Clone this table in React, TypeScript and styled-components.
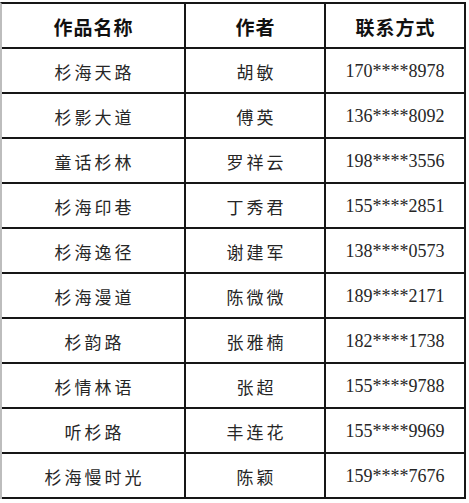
import React from 'react'
import styled, { createGlobalStyle } from 'styled-components'

const GlobalStyle = createGlobalStyle`
  html, body {
    margin: 0;
    padding: 0;
    background: #fff;
  }
`

const Page = styled.div`
  padding: 2px 0 0 0;
  width: 469px;
  height: 503px;
  box-sizing: border-box;
  overflow: hidden;
`

const Grid = styled.div`
  display: grid;
  grid-template-columns: 184px 140px 140px;
  grid-auto-rows: 45px;
  border-top: 2px solid #161616;
  border-left: 2px solid #bdbdbd;
  width: max-content;
`

const Cell = styled.div<{ $head?: boolean; $num?: boolean }>`
  display: flex;
  align-items: center;
  justify-content: center;
  box-sizing: border-box;
  border-right: 2px solid #161616;
  border-bottom: 2px solid #161616;
  padding-top: 1px;
  color: ${p => (p.$head ? '#111' : '#262626')};
  font-family: ${p =>
    p.$num
      ? '"Liberation Serif", "Noto Sans CJK SC", serif'
      : '"Noto Sans CJK SC", sans-serif'};
  font-size: ${p => (p.$head ? '19px' : p.$num ? '18px' : '17px')};
  font-weight: ${p => (p.$head ? 700 : 400)};
  letter-spacing: ${p => (p.$head ? '1px' : p.$num ? '0' : '3px')};
  text-indent: ${p => (p.$head ? '1px' : p.$num ? '0' : '3px')};
`

const rows = [
  ['杉海天路', '胡敏', '170****8978'],
  ['杉影大道', '傅英', '136****8092'],
  ['童话杉林', '罗祥云', '198****3556'],
  ['杉海印巷', '丁秀君', '155****2851'],
  ['杉海逸径', '谢建军', '138****0573'],
  ['杉海漫道', '陈微微', '189****2171'],
  ['杉韵路', '张雅楠', '182****1738'],
  ['杉情林语', '张超', '155****9788'],
  ['听杉路', '丰连花', '155****9969'],
  ['杉海慢时光', '陈颖', '159****7676'],
]

export default function App() {
  return (
    <Page>
      <GlobalStyle />
      <Grid>
        <Cell $head>作品名称</Cell>
        <Cell $head>作者</Cell>
        <Cell $head>联系方式</Cell>
        {rows.map(([name, author, phone]) => (
          <React.Fragment key={phone}>
            <Cell>{name}</Cell>
            <Cell>{author}</Cell>
            <Cell $num>{phone}</Cell>
          </React.Fragment>
        ))}
      </Grid>
    </Page>
  )
}
